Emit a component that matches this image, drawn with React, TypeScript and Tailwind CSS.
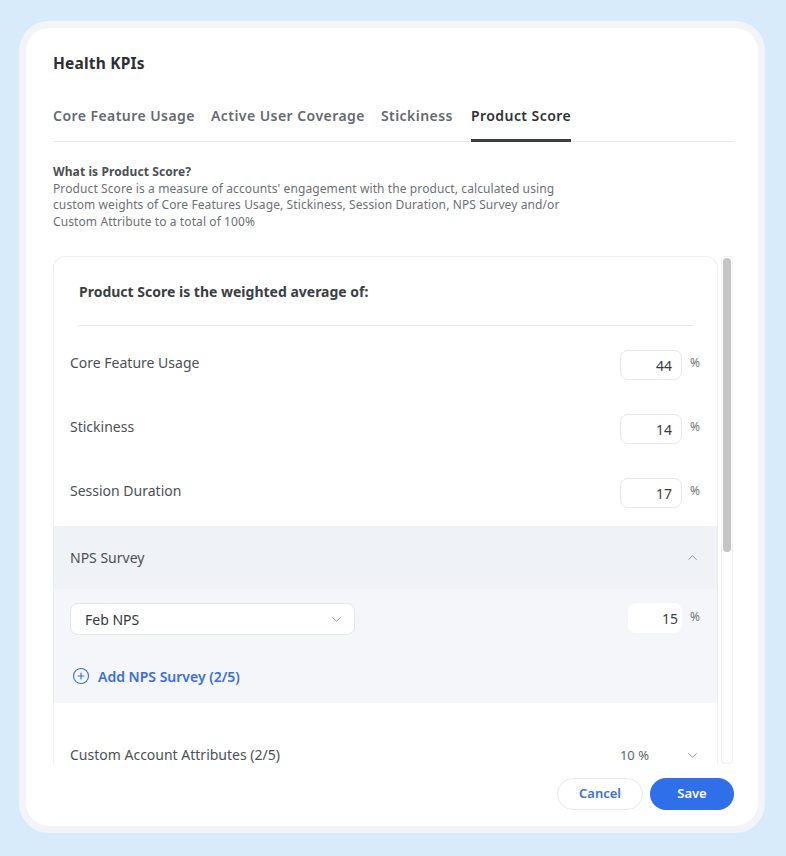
import { ChevronDown, ChevronUp, CirclePlus } from "lucide-react";

const font = { fontFamily: '"Noto Sans", "Open Sans", Arial, sans-serif' };
const tabs = ["Core Feature Usage", "Active User Coverage", "Stickiness", "Product Score"];
const weights = [
  { label: "Core Feature Usage", value: 44 },
  { label: "Stickiness", value: 14 },
  { label: "Session Duration", value: 17 },
];

export default function App() {
  return (
    <div style={font} className="min-h-[856px] bg-[#d7ebfb] pl-[19px] pt-[21px]">
      <div className="flex h-[812px] w-[746px] flex-col rounded-[30px] border-[7px] border-[#f2f4f7] bg-white pl-[27px] pr-[25px] pb-4 pt-[25px]">
        <h1 className="text-[15.5px] font-bold leading-5 tracking-[0.2px] text-[#2c3036]">Health KPIs</h1>
        <KpiTabs active="Product Score" />
        <div className="mt-[22px] w-[530px] text-[12px] leading-[16.5px] tracking-[0.1px] text-[#6b7078]">
          <p className="font-bold text-[#4a4f56]">What is Product Score?</p>
          <p>Product Score is a measure of accounts' engagement with the product, calculated using custom weights of Core Features Usage, Stickiness, Session Duration, NPS Survey and/or Custom Attribute to a total of 100%</p>
        </div>
        <div className="mt-[26px] flex h-[508px] gap-[3px]">
          <ScorePanel />
          <div className="w-3 rounded-sm border border-[#eef0f3] px-px pt-px">
            <div className="h-[294px] rounded-full bg-[#c5c5c5]" />
          </div>
        </div>
        <div className="-mr-px mt-[14px] flex justify-end gap-[7px]">
          <button className="h-8 w-[86px] rounded-full border border-[#e6e9ed] text-[13px] font-semibold text-[#3b6fd6]">Cancel</button>
          <button className="h-8 w-[84px] rounded-full bg-[#2f6fe9] text-[13px] font-semibold text-white">Save</button>
        </div>
      </div>
    </div>
  );
}

function KpiTabs({ active }: { active: string }) {
  return (
    <div className="mt-[33px] flex gap-4 border-b border-[#e8eaee]">
      {tabs.map((tab) => (
        <div key={tab} className={`-mb-px border-b-[3px] pb-[13px] text-[14px] font-semibold leading-5 tracking-[0.45px] ${tab === active ? "ml-[2px] border-[#3a3e44] text-[#2e3238]" : "border-transparent text-[#646a73]"}`}>
          {tab}
        </div>
      ))}
    </div>
  );
}

function ScorePanel() {
  return (
    <div className="flex-1 overflow-hidden rounded-t-xl border-x border-t border-[#eceef1]">
      <p className="px-[25px] pt-[25px] text-[14px] font-bold leading-5 text-[#3a3e45]">Product Score is the weighted average of:</p>
      <div className="mx-[24px] mt-[23px] border-t border-[#e6e8ec]" />
      <div className="mt-2">
        {weights.map((w) => <WeightRow key={w.label} label={w.label} value={w.value} />)}
      </div>
      <div className="bg-[#f4f6f9]">
        <div className="flex h-[63px] items-center justify-between bg-[#eff2f6] pl-4 pr-[17px] text-[14px] text-[#4b5057]">
          <span>NPS Survey</span>
          <ChevronUp size={15} strokeWidth={1.6} className="text-[#8e96a1]" />
        </div>
        <div className="flex items-center justify-between pl-4 pr-[17px] pt-[14px]">
          <div className="flex h-8 w-[285px] items-center justify-between rounded-lg border border-[#e3e6ea] bg-white pl-[14px] pr-[10px] text-[14px] text-[#33383e]">
            <span>Feb NPS</span>
            <ChevronDown size={15} strokeWidth={1.6} className="text-[#8e96a1]" />
          </div>
          <div className="flex items-center gap-[8px]">
            <div className="-mt-[2px] flex h-[30px] w-[54px] items-center justify-end rounded-lg bg-white pr-[4px] text-[14px] text-[#3a3e44]">15</div>
            <span className="mb-1 text-[12px] text-[#70767e]">%</span>
          </div>
        </div>
        <div className="flex h-[68px] items-center gap-[8px] pl-[18px] pt-[14px] text-[14px] font-semibold text-[#3b6fd6]">
          <CirclePlus size={18} strokeWidth={1.5} />
          <span>Add NPS Survey (2/5)</span>
        </div>
      </div>
      <div className="flex items-center justify-between pl-4 pr-[17px] pt-[42px] text-[14px] leading-5 text-[#4b5057]">
        <span>Custom Account Attributes (2/5)</span>
        <div className="flex items-center gap-[36px]">
          <span className="text-[13px] text-[#5d636b]">10 %</span>
          <ChevronDown size={15} strokeWidth={1.6} className="text-[#8e96a1]" />
        </div>
      </div>
    </div>
  );
}

function WeightRow({ label, value }: { label: string; value: number }) {
  return (
    <div className="flex h-16 items-center justify-between pl-4 pr-[17px] text-[14px] text-[#4b5057]">
      <span className="-mt-2">{label}</span>
      <div className="flex items-center gap-[8px]">
        <div className="-mt-[2px] flex h-[30px] w-[62px] items-center justify-end rounded-lg border border-[#e6e8ec] bg-white pr-[9px] text-[14px] text-[#3a3e44]">{value}</div>
        <span className="mb-[6px] text-[12px] text-[#70767e]">%</span>
      </div>
    </div>
  );
}
